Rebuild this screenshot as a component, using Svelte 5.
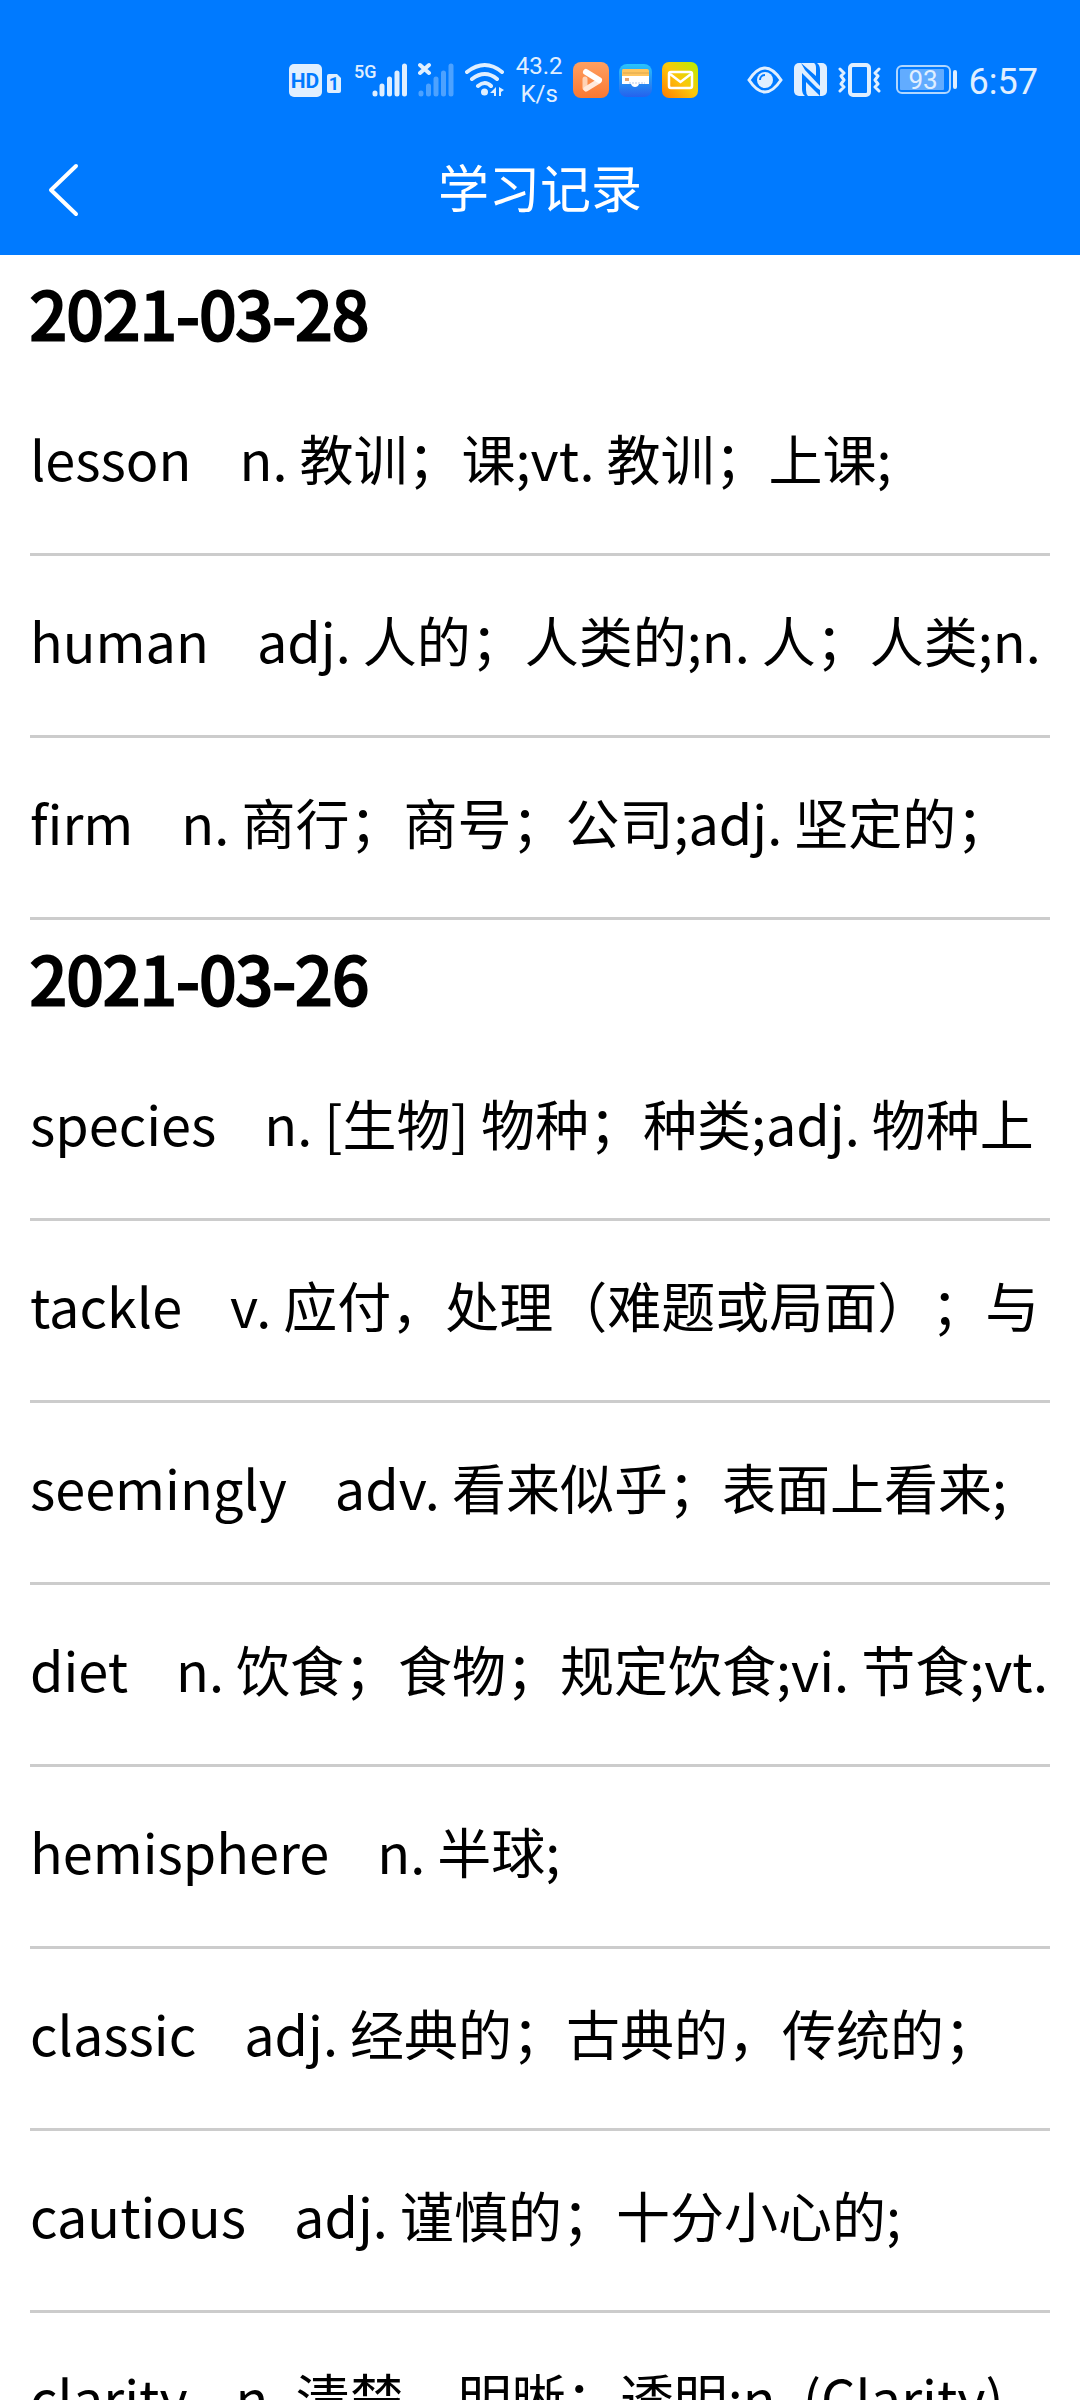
<script>
  const days = [
    {
      date: '2021-03-28',
      words: [
        { word: 'lesson', meaning: 'n. 教训；课;vt. 教训；上课;' },
        { word: 'human', meaning: 'adj. 人的；人类的;n. 人；人类;n.' },
        { word: 'firm', meaning: 'n. 商行；商号；公司;adj. 坚定的；' }
      ]
    },
    {
      date: '2021-03-26',
      words: [
        { word: 'species', meaning: 'n. [生物] 物种；种类;adj. 物种上' },
        { word: 'tackle', meaning: 'v. 应付，处理（难题或局面）；与' },
        { word: 'seemingly', meaning: 'adv. 看来似乎；表面上看来;' },
        { word: 'diet', meaning: 'n. 饮食；食物；规定饮食;vi. 节食;vt.' },
        { word: 'hemisphere', meaning: 'n. 半球;' },
        { word: 'classic', meaning: 'adj. 经典的；古典的，传统的；' },
        { word: 'cautious', meaning: 'adj. 谨慎的；十分小心的;' },
        { word: 'clarity', meaning: 'n. 清楚，明晰；透明;n. (Clarity)' }
      ]
    }
  ];
</script>

<div class="page" lang="zh-CN">
  <header>
    <div class="status">
      <div class="group">
        <svg width="55" height="36" viewBox="0 0 55 36">
          <rect x="0" y="2" width="33" height="33" rx="5" fill="#e0efff" />
          <text x="16" y="26" text-anchor="middle" font-size="21" font-weight="700" class="cut">HD</text>
          <path d="M40 12h8l4 4v13a2 2 0 0 1-2 2H40a2 2 0 0 1-2-2V14a2 2 0 0 1 2-2z" fill="#e0efff" />
          <text x="45" y="28" text-anchor="middle" font-size="18" font-weight="700" class="cut">1</text>
        </svg>
        <svg width="54" height="36" viewBox="0 0 54 36">
          <text x="0" y="16" font-size="18" font-weight="500">5G</text>
          <g stroke="#e0efff" stroke-width="5" stroke-linecap="round">
            <path d="M21 31v1M28 24v8M35.500 17v15M43 11v21M50.500 4v28" />
          </g>
        </svg>
        <svg width="37" height="36" viewBox="0 0 37 36">
          <path d="M2 3l9 8M11 3l-9 8" stroke="#e0efff" stroke-width="4" stroke-linecap="round" />
          <g stroke="#4da2ff" stroke-width="5" stroke-linecap="round">
            <path d="M3 31v1M10.500 24v8M18 17v15M25.500 11v21M33 4v28" />
          </g>
        </svg>
        <svg width="41" height="36" viewBox="0 0 41 36">
          <g fill="none" stroke="#e0efff" stroke-width="4" stroke-linecap="round">
            <path d="M2 10q18-14 35 0M7 17q13-10 25 0M13 24q7-6 13 0" />
          </g>
          <circle cx="19.500" cy="30" r="3.500" fill="#e0efff" />
          <path d="M31 25v9h-2v-3h-4zM34 25v9h2v-4l3-2z" fill="#e0efff" />
        </svg>
        <div class="speed"><span>43.2</span><span>K/s</span></div>
        <svg width="36" height="36" viewBox="0 0 36 36">
          <defs>
            <linearGradient id="orange" x1="0" y1="0" x2="0" y2="1">
              <stop offset="0" stop-color="#ffa061" /><stop offset="1" stop-color="#f97832" />
            </linearGradient>
          </defs>
          <rect width="36" height="36" rx="8" fill="url(#orange)" />
          <path d="M12 17v9" stroke="#ffd2b4" stroke-width="5" stroke-linecap="round" />
          <path d="M13 27l13-8" stroke="#ffe9dc" stroke-width="5" stroke-linecap="round" />
          <path d="M13 10l13 8" stroke="#fff" stroke-width="6" stroke-linecap="round" />
        </svg>
        <svg width="33" height="36" viewBox="0 0 33 36">
          <defs>
            <linearGradient id="wallet" x1="0" y1="0" x2="0" y2="1">
              <stop offset="0" stop-color="#29c4fb" /><stop offset="1" stop-color="#2562ed" />
            </linearGradient>
          </defs>
          <rect y="2" width="33" height="33" rx="8" fill="url(#wallet)" />
          <path d="M4 7h24a2 2 0 0 1 2 2v7H3V9q0-2 1-2z" fill="#ffc55e" />
          <path d="M4 11h26" stroke="#dca64c" stroke-width="1" />
          <path d="M3 14h27v8H20q-1 3-4 3t-4-3H3z" fill="#fff" />
          <rect x="6" y="16" width="4" height="3" fill="#e7a673" />
          <path d="M10 21h16" stroke="#b9c8e6" stroke-width="1" stroke-dasharray="2 1" />
        </svg>
        <svg width="36" height="36" viewBox="0 0 36 36">
          <defs>
            <linearGradient id="mail" x1="0" y1="1" x2="1" y2="0">
              <stop offset="0" stop-color="#ff7a00" /><stop offset="0.500" stop-color="#fcc70b" /><stop offset="1" stop-color="#b5f000" />
            </linearGradient>
          </defs>
          <rect width="36" height="36" rx="7" fill="url(#mail)" />
          <rect x="7" y="10" width="23" height="16" rx="2" fill="none" stroke="#fff" stroke-width="2.500" />
          <path d="M8 12l10.500 8L29 12" fill="none" stroke="#fff" stroke-width="2.500" />
        </svg>
      </div>
      <div class="group wide">
        <svg width="36" height="36" viewBox="0 0 36 36">
          <path d="M2 18Q18-6 34 18Q18 42 2 18z" fill="none" stroke="#e0efff" stroke-width="3" />
          <circle cx="18" cy="18" r="8" fill="#e0efff" />
          <path d="M13 18a5 5 0 0 1 5-5" fill="none" stroke="#007aff" stroke-width="2" />
        </svg>
        <svg width="33" height="36" viewBox="0 0 33 36">
          <rect y="1" width="33" height="33" rx="5" fill="#e0efff" />
          <path d="M7 1l15 13V6q0-4-2-5h3q3 2 3 7v16L11 8z" fill="#007aff" />
          <path d="M26 34L12 20v8q0 4 2 6h-3q-3-2-3-7V11l15 15 3 2z" fill="#007aff" />
        </svg>
        <svg width="43" height="36" viewBox="0 0 43 36">
          <rect x="12" y="3" width="19" height="30" rx="3" fill="none" stroke="#e0efff" stroke-width="4" />
          <g fill="none" stroke="#e0efff" stroke-width="3" stroke-linejoin="round" stroke-linecap="round">
            <path d="M2 7l4 4-3 3 3 4-3 4 3 3-4 4M41 7l-4 4 3 3-3 4 3 4-3 3 4 4" />
          </g>
        </svg>
        <svg class="battery" width="62" height="36" viewBox="0 0 62 36">
          <rect x="1" y="4" width="53" height="27" rx="5" fill="none" stroke="#b0d7ff" stroke-width="2" />
          <rect x="4" y="7" width="44" height="21" rx="1" fill="#62acff" />
          <path d="M59 10v15" stroke="#e0efff" stroke-width="4" stroke-linecap="round" />
          <text x="27" y="27" text-anchor="middle" font-size="26">93</text>
        </svg>
        <time>6:57</time>
      </div>
    </div>
    <nav>
      <button aria-label="返回">
        <svg width="32" height="54" viewBox="0 0 32 54">
          <path d="M28 3L3 27l25 24" fill="none" stroke="#fff" stroke-width="4" stroke-linecap="round" stroke-linejoin="round" />
        </svg>
      </button>
      <h1>学习记录</h1>
    </nav>
  </header>
  <main>
    {#each days as day}
      <section>
        <h2>{day.date}</h2>
        <ul>
          {#each day.words as item}
            <li><span class="word">{item.word}</span><span>{item.meaning}</span></li>
          {/each}
        </ul>
      </section>
    {/each}
  </main>
</div>

<style>
  :global(body) {
    margin: 0;
    background: #fff;
  }
  .page {
    height: 100vh;
    overflow: hidden;
    color: #000;
    font-family: 'Noto Sans CJK SC', sans-serif;
    text-spacing-trim: space-all;
  }
  header {
    background: #007aff;
    color: #fff;
  }
  .status {
    display: flex;
    justify-content: flex-end;
    align-items: center;
    gap: 49px;
    height: 88px;
    padding: 36px 42px 0 0;
    color: #e0efff;
    font-family: Roboto, sans-serif;
  }
  .group {
    display: flex;
    align-items: center;
    gap: 10px;
  }
  .wide {
    gap: 11px;
  }
  svg {
    display: block;
    flex: none;
  }
  svg text {
    fill: #e0efff;
    font-family: Roboto, sans-serif;
  }
  svg .cut {
    fill: #007aff;
  }
  .speed {
    display: flex;
    flex-direction: column;
    align-items: center;
    font-size: 24px;
    line-height: 28px;
  }
  .battery {
    margin-left: 4px;
  }
  time {
    padding-top: 4px;
    font-size: 36px;
    line-height: 40px;
  }
  nav {
    display: grid;
    grid-template-columns: 120px 1fr 120px;
    align-items: center;
    height: 131px;
  }
  button {
    padding: 0 0 0 48px;
    border: 0;
    background: none;
  }
  h1 {
    margin: 0;
    padding-bottom: 8px;
    text-align: center;
    font-size: 51px;
    font-weight: 400;
    line-height: 72px;
  }
  main {
    padding: 0 30px;
  }
  h2 {
    margin: 0;
    padding-bottom: 7px;
    font-size: 66px;
    font-weight: 400;
    line-height: 112px;
    -webkit-text-stroke: 3px #000;
  }
  ul {
    margin: 0;
    padding: 0;
    list-style: none;
  }
  li {
    display: flex;
    align-items: center;
    box-sizing: border-box;
    height: 182px;
    padding-bottom: 11px;
    border-bottom: 3px solid #ccc;
    font-size: 54px;
    line-height: 80px;
    white-space: nowrap;
    overflow: hidden;
  }
  .word {
    margin-right: 48px;
  }
</style>
